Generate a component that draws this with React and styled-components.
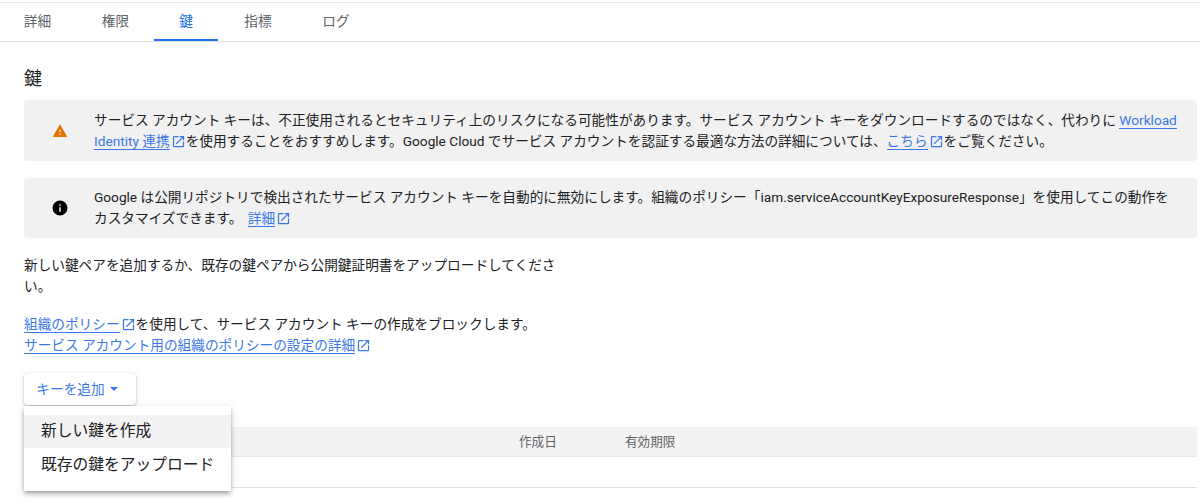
import React from 'react'
import styled, { createGlobalStyle } from 'styled-components'

const GlobalStyle = createGlobalStyle`
  html, body {
    margin: 0;
    padding: 0;
    background: #fff;
    overflow: hidden;
  }
  body {
    font-family: Roboto, "Noto Sans CJK JP", sans-serif;
    font-size: 13.67px;
    color: #202124;
  }
`

const Page = styled.div`
  width: 1200px;
  height: 498px;
  overflow: hidden;
  padding-top: 2px;
  box-sizing: border-box;
`

const Tabs = styled.div`
  display: flex;
  height: 38px;
  border-top: 1px solid #e8e8e8;
  border-bottom: 1px solid #e0e0e0;
`

const Tab = styled.div`
  width: ${props => props.$width}px;
  display: flex;
  justify-content: center;
  align-items: center;
  padding-bottom: 5px;
  padding-left: ${props => props.$shift || 0}px;
  box-sizing: border-box;
  font-size: 13.67px;
  color: ${props => props.$active ? '#1a73e8' : '#5f6368'};
  box-shadow: ${props => props.$active ? 'inset 0 -2px 0 #1a73e8' : 'none'};
`

const Content = styled.div`
  padding: 0 3px 0 24px;
`

const Heading = styled.h2`
  margin: 0;
  padding-top: 25px;
  height: 33px;
  line-height: 24px;
  font-size: 18px;
  font-weight: 400;
  color: #202124;
`

const Alert = styled.div`
  display: flex;
  align-items: center;
  height: ${props => props.$height}px;
  margin-bottom: 17px;
  background: #f1f1f1;
  border-radius: 4px;
  line-height: 21px;
`

const AlertIcon = styled.div`
  width: 70px;
  flex: none;
  box-sizing: border-box;
  padding-left: 2px;
  display: flex;
  justify-content: center;
`

const AlertText = styled.div`
  flex: 1;
  padding-right: 20px;
`

const Link = styled.a`
  color: #3b78e7;
  border-bottom: 1px solid #3b78e7;
  margin-left: ${props => props.$lead || 0}px;
`

const ExternalMark = styled.svg`
  width: 15px;
  height: 15px;
  vertical-align: -3px;
  margin-left: 1px;
  fill: #3b78e7;
`

const Para = styled.p`
  margin: 0 0 ${props => props.$after}px;
  width: ${props => props.$width}px;
  line-height: 21px;
`

const ButtonArea = styled.div`
  position: relative;
  padding-top: 17px;
`

const AddButton = styled.div`
  width: 112px;
  height: 32px;
  box-sizing: border-box;
  padding: 0 6px 2px 0;
  display: flex;
  align-items: center;
  justify-content: center;
  gap: 5px;
  border-radius: 4px;
  background: #fff;
  color: #3b78e7;
  font-size: 13.67px;
  box-shadow: 0 1px 2px rgba(60, 64, 67, .3), 0 1px 3px 1px rgba(60, 64, 67, .1);
`

const Caret = styled.span`
  width: 0;
  height: 0;
  border-left: 4px solid transparent;
  border-right: 4px solid transparent;
  border-top: 4px solid #3b78e7;
  margin-top: 2px;
`

const Menu = styled.div`
  position: absolute;
  left: 0;
  top: 50px;
  width: 207px;
  height: 85px;
  padding-top: 9px;
  box-sizing: border-box;
  display: flex;
  flex-direction: column;
  gap: 1px;
  background: #fff;
  z-index: 2;
  box-shadow: 0 2px 4px -1px rgba(0, 0, 0, .3), 0 4px 5px rgba(0, 0, 0, .14), 0 1px 10px rgba(0, 0, 0, .08);
`

const MenuItem = styled.div`
  height: 33px;
  line-height: 31px;
  padding-left: 17px;
  font-size: 15.75px;
  color: #202124;
  background: ${props => props.$hover ? '#f3f3f3' : 'transparent'};
`

const Table = styled.div`
  margin-top: 22px;
`

const HeaderRow = styled.div`
  display: flex;
  align-items: center;
  height: 30px;
  box-sizing: border-box;
  padding-bottom: 2px;
  background: #f3f3f3;
  border-bottom: 1px solid #e6e6e6;
  color: #5f6368;
  font-size: 12.6px;
`

const HeaderCell = styled.div`
  width: ${props => props.$width}px;
  flex: none;
`

const EmptyRow = styled.div`
  height: 31px;
  box-sizing: border-box;
  border-bottom: 1px solid #e0e0e0;
`

const External = () => (
  <ExternalMark viewBox="0 0 24 24">
    <path d="M19 19H5V5h7V3H5a2 2 0 0 0-2 2v14a2 2 0 0 0 2 2h14a2 2 0 0 0 2-2v-7h-2v7zM14 3v2h3.59l-9.83 9.83 1.41 1.41L19 6.41V10h2V3h-7z" />
  </ExternalMark>
)

const App = () => {
  return (
    <Page>
      <GlobalStyle />
      <Tabs>
        <Tab $width={75}>詳細</Tab>
        <Tab $width={79} $shift={2}>権限</Tab>
        <Tab $width={64} $active>鍵</Tab>
        <Tab $width={79} $shift={1}>指標</Tab>
        <Tab $width={78}>ログ</Tab>
      </Tabs>
      <Content>
        <Heading>鍵</Heading>
        <Alert $height={61}>
          <AlertIcon>
            <svg width="16" height="16" viewBox="0 0 24 24" fill="#e37400">
              <path d="M1 21h22L12 2 1 21zm12-3h-2v-2h2v2zm0-4h-2v-4h2v4z" />
            </svg>
          </AlertIcon>
          <AlertText>
            サービス アカウント キーは、不正使用されるとセキュリティ上のリスクになる可能性があります。サービス アカウント キーをダウンロードするのではなく、代わりに <Link>Workload Identity 連携</Link><External />を使用することをおすすめします。Google Cloud でサービス アカウントを認証する最適な方法の詳細については、<Link>こちら</Link><External />をご覧ください。
          </AlertText>
        </Alert>
        <Alert $height={60}>
          <AlertIcon>
            <svg width="18" height="18" viewBox="0 0 24 24" fill="#000">
              <path d="M12 2a10 10 0 1 0 0 20 10 10 0 0 0 0-20zm1 15h-2v-6h2v6zm0-8h-2V7h2v2z" />
            </svg>
          </AlertIcon>
          <AlertText>
            Google は公開リポジトリで検出されたサービス アカウント キーを自動的に無効にします。組織のポリシー「iam.serviceAccountKeyExposureResponse」を使用してこの動作をカスタマイズできます。 <Link $lead={2}>詳細</Link><External />
          </AlertText>
        </Alert>
        <Para $width={540} $after={17}>
          新しい鍵ペアを追加するか、既存の鍵ペアから公開鍵証明書をアップロードしてください。
        </Para>
        <Para $width={600} $after={0}>
          <Link>組織のポリシー</Link><External />を使用して、サービス アカウント キーの作成をブロックします。<br />
          <Link>サービス アカウント用の組織のポリシーの設定の詳細</Link><External />
        </Para>
        <ButtonArea>
          <AddButton>キーを追加<Caret /></AddButton>
          <Menu>
            <MenuItem $hover>新しい鍵を作成</MenuItem>
            <MenuItem>既存の鍵をアップロード</MenuItem>
          </Menu>
        </ButtonArea>
        <Table>
          <HeaderRow>
            <HeaderCell $width={495} />
            <HeaderCell $width={106}>作成日</HeaderCell>
            <HeaderCell $width={100}>有効期限</HeaderCell>
          </HeaderRow>
          <EmptyRow />
        </Table>
      </Content>
    </Page>
  )
}

export default App
